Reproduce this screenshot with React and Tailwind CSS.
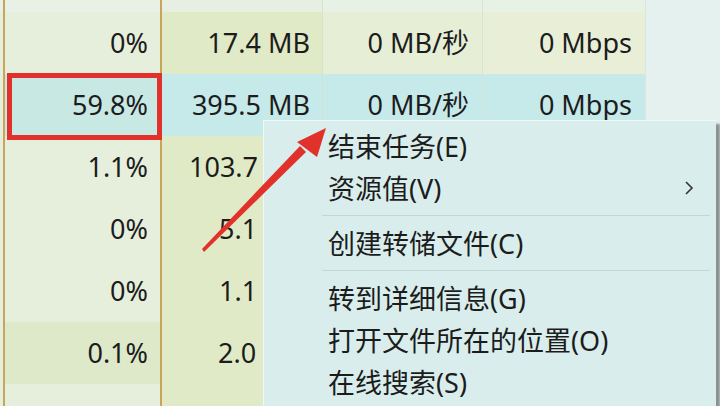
import React from "react";

// rows 3+ are partly covered by the menu, so only the visible part is written
const rows = [
    { cpu: "0%", mem: "17.4 MB", disk: "0 MB/秒", net: "0 Mbps" },
    { cpu: "59.8%", mem: "395.5 MB", disk: "0 MB/秒", net: "0 Mbps", selected: true },
    { cpu: "1.1%", mem: "103.7", memPad: "pl-[27px]" },
    { cpu: "0%", mem: "5.1", memPad: "pl-[57px]" },
    { cpu: "0%", mem: "1.1", memPad: "pl-[57px]" },
    { cpu: "0.1%", mem: "2.0", memPad: "pl-[56px]", busy: true },
    { cpu: "", mem: "" },
];

const menu = [
    { label: "结束任务(E)" },
    { label: "资源值(V)", sub: true },
    { sep: true },
    { label: "创建转储文件(C)" },
    { sep: true },
    { label: "转到详细信息(G)" },
    { label: "打开文件所在的位置(O)" },
    { label: "在线搜索(S)" },
];

const Row = ({ row }) => {
    const sel = row.selected;
    return (
        <div className="flex h-[62px] text-[27px] text-[#1c1c1c]">
            <div className="w-[3px] bg-[#e6efdc]" />
            <div
                className={`w-[159px] flex items-center justify-end pr-[12px] border-l-2 border-r-2 border-[#c9a55a] ${
                    sel ? "bg-[#c8e8e4]" : row.busy ? "bg-[#dde9c9]" : "bg-[#e6efdc]"
                }`}
            >
                {row.cpu}
            </div>
            <div
                className={`w-[161px] flex items-center border-r border-[#d6e2cc] ${
                    row.memPad ? `justify-start ${row.memPad}` : "justify-end pr-[12px]"
                } ${sel ? "bg-[#c6e9ea]" : "bg-[#e1eac6]"}`}
            >
                {row.mem}
            </div>
            <div
                className={`w-[160px] flex items-center justify-end pr-[13px] border-r border-[#d6e4d2] ${
                    sel ? "bg-[#c6e9ea]" : "bg-[#e6eed6]"
                }`}
            >
                {row.disk}
            </div>
            <div
                className={`w-[163px] flex items-center justify-end pr-[13px] border-r border-[#d8e6de] ${
                    sel ? "bg-[#c6e9ea]" : "bg-[#e8efd6]"
                }`}
            >
                {row.net}
            </div>
            <div className="flex-1 bg-[#e4f1ee]" />
        </div>
    );
};

const Arrow = () => (
    <svg className="absolute left-0 top-0 pointer-events-none" width="720" height="406">
        <polygon points="202,249 204,252 306,152 300,146" fill="#e0322b" />
        <polygon points="326,128 297,142 317,157" fill="#e0322b" />
    </svg>
);

export default function App() {
    return (
        <div
            className="relative w-[720px] h-[406px] overflow-hidden bg-[#e4f1ee]"
            style={{ fontFamily: '"Noto Sans", "Noto Sans CJK SC", sans-serif' }}
        >
            <div className="flex h-[12px]">
                <div className="w-[3px] bg-[#e8f1e6]" />
                <div className="w-[159px] bg-[#e8f1e6] border-l-2 border-r-2 border-[#c9a55a]" />
                <div className="w-[161px] bg-[#e6efe2] border-r border-[#d6e2cc]" />
                <div className="w-[160px] bg-[#e8f1e6] border-r border-[#d6e4d2]" />
                <div className="w-[163px] bg-[#e8f1e6] border-r border-[#d8e6de]" />
                <div className="flex-1" />
            </div>
            {rows.map((r, i) => (
                <Row key={i} row={r} />
            ))}

            {/* red highlight box */}
            <div className="absolute left-[7px] top-[73px] w-[155px] h-[67px] border-[5px] border-[#e2302c]" />

            {/* context menu */}
            <div className="absolute left-[263px] top-[120px] w-[453px] h-[300px] bg-[#d9eeec] border-t border-l border-[#eef8f6] shadow-[4px_4px_2px_rgba(60,70,70,0.55)] pt-[4px] text-[27px] text-[#1c1c1c]">
                {menu.map((m, i) =>
                    m.sep ? (
                        <div key={i} className="ml-[58px] mr-[6px] my-[6px] h-px bg-[#c2d8d6]" />
                    ) : (
                        <div key={i} className="relative h-[42px] pl-[64px] flex items-center leading-none">
                            {m.label}
                            {m.sub && (
                                <svg className="absolute right-[22px] top-[14px]" width="10" height="14" viewBox="0 0 10 14">
                                    <path d="M2 1 L8 7 L2 13" fill="none" stroke="#333" strokeWidth="1.6" />
                                </svg>
                            )}
                        </div>
                    )
                )}
            </div>

            <Arrow />
        </div>
    );
}
